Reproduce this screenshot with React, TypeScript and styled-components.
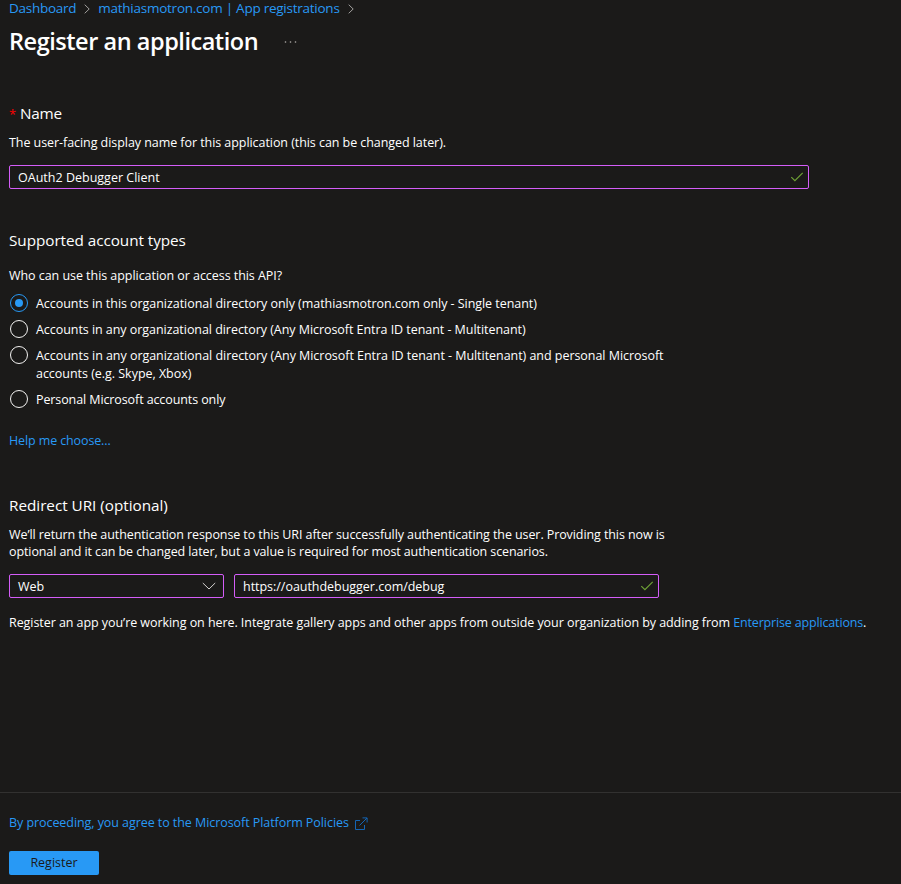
import React, { useState } from "react";
import styled, { createGlobalStyle } from "styled-components";

const GlobalStyle = createGlobalStyle`
  *, *::before, *::after { box-sizing: border-box; }
  body { margin: 0; background: #1b1a19; color: #fff; overflow: hidden; }
  body, input, button, select { font-family: "Open Sans", "Noto Sans", sans-serif; }
`;

const Page = styled.div`
  display: flex;
  flex-direction: column;
  height: 884px;
  font-size: 12.5px;
  line-height: 18px;
  white-space: nowrap;
`;

const Main = styled.main`
  flex: 1;
  padding: 0 9px;
`;

const Text = styled.span<{ $ls?: number }>`
  letter-spacing: ${(p) => p.$ls ?? 0}px;
`;

const Link = styled.a<{ $ls?: number }>`
  color: #2899f5;
  text-decoration: none;
  letter-spacing: ${(p) => p.$ls ?? 0}px;
`;

const Breadcrumb = styled.nav`
  display: flex;
  align-items: center;
  height: 16px;
  font-size: 13.5px;
`;

const CrumbChevron = styled.svg`
  width: 6px;
  height: 10px;
  margin: 2px 8px 0;
  fill: none;
  stroke: #a19f9d;
`;

const TitleRow = styled.header`
  display: flex;
  align-items: center;
  height: 32px;
  margin-top: 9px;
`;

const Title = styled.h1`
  width: 275px;
  margin: 0;
  font-size: 23.5px;
  line-height: 32px;
  font-weight: 600;
  letter-spacing: -0.46px;
`;

const More = styled.svg`
  width: 13px;
  height: 4px;
  margin-top: 2px;
  fill: #b3b0ad;
`;

const Section = styled.section<{ $top: number }>`
  margin-top: ${(p) => p.$top}px;
`;

const Heading = styled.h2<{ $ls: number }>`
  margin: 0;
  height: 22px;
  font-size: 15.3px;
  line-height: 22px;
  font-weight: 400;
  letter-spacing: ${(p) => p.$ls}px;
`;

const Required = styled.span`
  margin-right: 4px;
  color: #f00;
  font-size: 13px;
`;

const Paragraph = styled.p<{ $top: number; $line?: number }>`
  margin: ${(p) => p.$top}px 0 0;
  line-height: ${(p) => p.$line ?? 18}px;
`;

const Field = styled.label<{ $width: number }>`
  display: flex;
  align-items: center;
  width: ${(p) => p.$width}px;
  height: 24px;
  padding: 0 4px 0 8px;
  border: 1px solid #d45df8;
  border-radius: 2px;
`;

const Input = styled.input<{ $ls: number }>`
  flex: 1;
  min-width: 0;
  height: 20px;
  padding: 0;
  border: 0;
  outline: 0;
  background: transparent;
  color: #fff;
  font-size: 12.5px;
  letter-spacing: ${(p) => p.$ls}px;
`;

const FieldIcon = styled.svg<{ $color: string; $right?: number }>`
  width: 14px;
  height: 12px;
  margin-right: ${(p) => p.$right ?? 0}px;
  fill: none;
  stroke: ${(p) => p.$color};
`;

const FieldRow = styled.div<{ $top: number }>`
  display: flex;
  gap: 10px;
  margin-top: ${(p) => p.$top}px;
`;

const SelectText = styled.span`
  flex: 1;
  padding-top: 1px;
`;

const Options = styled.div`
  display: flex;
  flex-direction: column;
  gap: 8px;
  margin-top: 10px;
`;

const Option = styled.label`
  display: flex;
  align-items: flex-start;
`;

const Radio = styled.input`
  appearance: none;
  flex: none;
  display: grid;
  place-items: center;
  width: 18px;
  height: 18px;
  margin: -1px 8px 0 1px;
  border: 1px solid #f3f2f1;
  border-radius: 50%;
  &:checked { border-color: #2899f5; }
  &:checked::after {
    content: "";
    width: 8px;
    height: 8px;
    border-radius: 50%;
    background: #2899f5;
  }
`;

const Footer = styled.footer`
  height: 92px;
  padding: 21px 9px 0;
  border-top: 1px solid #323130;
`;

const Policy = styled.div`
  display: flex;
  align-items: center;
  height: 18px;
`;

const External = styled.svg`
  width: 14px;
  height: 14px;
  margin: 2px 0 0 5px;
  fill: none;
  stroke: #1465b5;
`;

const Register = styled.button`
  display: block;
  width: 90px;
  height: 24px;
  margin-top: 19px;
  padding: 0;
  border: 0;
  border-radius: 2px;
  background: #2899f5;
  color: #1b1a19;
  font-size: 12.5px;
  line-height: 22px;
`;

const Crumb = () => (
  <CrumbChevron viewBox="0 0 6 10"><path d="M.7.7 5.2 5 .7 9.3" /></CrumbChevron>
);

const Check = () => (
  <FieldIcon $color="#6fa336" viewBox="0 0 14 12"><path d="M1.3 6.2 4.9 9.7 12.7 1.9" strokeWidth="1.15" /></FieldIcon>
);

type AccountType = { lines: { text: string; ls: number }[] };

const accountTypes: AccountType[] = [
  { lines: [{ text: "Accounts in this organizational directory only (mathiasmotron.com only - Single tenant)", ls: -0.05 }] },
  { lines: [{ text: "Accounts in any organizational directory (Any Microsoft Entra ID tenant - Multitenant)", ls: -0.05 }] },
  {
    lines: [
      { text: "Accounts in any organizational directory (Any Microsoft Entra ID tenant - Multitenant) and personal Microsoft", ls: -0.042 },
      { text: "accounts (e.g. Skype, Xbox)", ls: -0.03 },
    ],
  },
  { lines: [{ text: "Personal Microsoft accounts only", ls: -0.1 }] },
];

export default function App() {
  const [selected, setSelected] = useState(0);
  const [name, setName] = useState("OAuth2 Debugger Client");
  const [uri, setUri] = useState("https://oauthdebugger.com/debug");

  return (
    <Page>
      <GlobalStyle />
      <Main>
        <Breadcrumb>
          <Link $ls={-0.27}>Dashboard</Link>
          <Crumb />
          <Link $ls={-0.25}>mathiasmotron.com | App registrations</Link>
          <Crumb />
        </Breadcrumb>
        <TitleRow>
          <Title>Register an application</Title>
          <More viewBox="0 0 13 4">
            <circle cx="1.5" cy="2" r=".8" /><circle cx="6.5" cy="2" r=".8" /><circle cx="11.5" cy="2" r=".8" />
          </More>
        </TitleRow>

        <Section $top={45}>
          <Heading $ls={-0.2}><Required>*</Required>Name</Heading>
          <Paragraph $top={10}>
            <Text $ls={-0.06}>The user-facing display name for this application (this can be changed later).</Text>
          </Paragraph>
          <FieldRow $top={13}>
            <Field $width={800}>
              <Input $ls={0.01} value={name} onChange={(e) => setName(e.target.value)} />
              <Check />
            </Field>
          </FieldRow>
        </Section>

        <Section $top={40}>
          <Heading $ls={-0.06}>Supported account types</Heading>
          <Paragraph $top={16}><Text $ls={-0.05}>Who can use this application or access this API?</Text></Paragraph>
          <Options>
            {accountTypes.map((type, i) => (
              <Option key={i}>
                <Radio type="radio" name="account" checked={selected === i} onChange={() => setSelected(i)} />
                <span>
                  {type.lines.map((line, n) => (
                    <React.Fragment key={n}>
                      {n > 0 && <br />}
                      <Text $ls={line.ls}>{line.text}</Text>
                    </React.Fragment>
                  ))}
                </span>
              </Option>
            ))}
          </Options>
          <Paragraph $top={23}><Link $ls={-0.12}>Help me choose...</Link></Paragraph>
        </Section>

        <Section $top={44}>
          <Heading $ls={-0.03}>Redirect URI (optional)</Heading>
          <Paragraph $top={10} $line={17}>
            <Text $ls={-0.09}>We’ll return the authentication response to this URI after successfully authenticating the user. Providing this now is</Text>
            <br />
            <Text $ls={-0.1}>optional and it can be changed later, but a value is required for most authentication scenarios.</Text>
          </Paragraph>
          <FieldRow $top={14}>
            <Field $width={215}>
              <SelectText>Web</SelectText>
              <FieldIcon $color="#d2d0ce" $right={3} viewBox="0 0 14 12"><path d="m.8 3 6.2 6 6.2-6" /></FieldIcon>
            </Field>
            <Field $width={425}>
              <Input $ls={-0.03} value={uri} onChange={(e) => setUri(e.target.value)} />
              <Check />
            </Field>
          </FieldRow>
          <Paragraph $top={16}>
            <Text $ls={-0.06}>Register an app you’re working on here. Integrate gallery apps and other apps from outside your organization by adding from </Text>
            <Link $ls={-0.16}>Enterprise applications</Link>.
          </Paragraph>
        </Section>
      </Main>

      <Footer>
        <Policy>
          <Link $ls={-0.065}>By proceeding, you agree to the Microsoft Platform Policies</Link>
          <External viewBox="0 0 14 14"><path d="M6 3.5H1.5v9h9V8M5.5 8.5l7.5-7.5M8.5.9H13.1V5.5" /></External>
        </Policy>
        <Register>Register</Register>
      </Footer>
    </Page>
  );
}
